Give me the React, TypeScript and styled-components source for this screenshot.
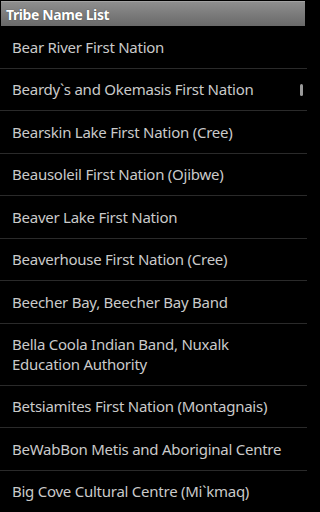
import React from 'react'
import styled, { createGlobalStyle } from 'styled-components'

const GlobalStyle = createGlobalStyle`
  html, body {
    margin: 0;
    padding: 0;
    background: #000;
  }
  body {
    font-family: "Noto Sans", "Open Sans", "DejaVu Sans", sans-serif;
  }
`

const Screen = styled.div`
  position: relative;
  width: 307px;
  height: 512px;
  overflow: hidden;
  background: #000;
`

const TitleBar = styled.div`
  margin: 1px 2px 0 1px;
  height: 24px;
  display: flex;
  align-items: center;
  padding-left: 5px;
  border-top: 1px solid #a2a2a2;
  background: linear-gradient(#8e8e8e, #696969);
  color: #fff;
  font-weight: bold;
  font-size: 14px;
  letter-spacing: -0.4px;
  text-shadow: 0 0 1px rgba(0, 0, 0, 0.6);
`

const List = styled.ul`
  list-style: none;
  margin: 0;
  padding: 0;
`

const Row = styled.li<{ $tall?: boolean }>`
  display: flex;
  align-items: center;
  box-sizing: border-box;
  height: ${(p) => (p.$tall ? '62px' : '42.5px')};
  padding: 0 12px;
  border-bottom: 1px solid #2a2a2a;
  color: #cacaca;
  font-size: 15px;
  line-height: 20px;
  letter-spacing: -0.25px;
`

const ScrollThumb = styled.div`
  position: absolute;
  right: 4px;
  top: 84px;
  width: 3px;
  height: 12px;
  border-radius: 2px;
  background: #9a9a9a;
`

const tribes = [
  'Bear River First Nation',
  'Beardy`s and Okemasis First Nation',
  'Bearskin Lake First Nation (Cree)',
  'Beausoleil First Nation (Ojibwe)',
  'Beaver Lake First Nation',
  'Beaverhouse First Nation (Cree)',
  'Beecher Bay, Beecher Bay Band',
  'Bella Coola Indian Band, Nuxalk Education Authority',
  'Betsiamites First Nation (Montagnais)',
  'BeWabBon Metis and Aboriginal Centre',
  'Big Cove Cultural Centre (Mi`kmaq)',
]

const App = (): React.ReactElement => {
  return (
    <Screen>
      <GlobalStyle />
      <TitleBar>Tribe Name List</TitleBar>
      <List>
        {tribes.map((name) => (
          <Row key={name} $tall={name.length > 40}>
            {name}
          </Row>
        ))}
      </List>
      <ScrollThumb />
    </Screen>
  )
}

export default App
